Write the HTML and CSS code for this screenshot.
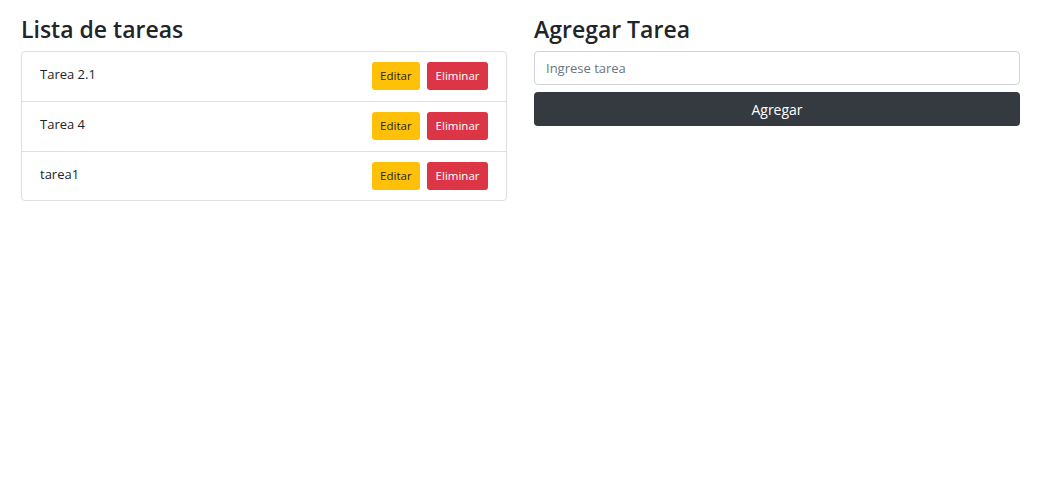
FILE: index.html
```html
<!DOCTYPE html>
<html lang="es">
<head>
<meta charset="utf-8">
<title>Tareas</title>
<link rel="stylesheet" href="styles.css">
</head>
<body>
<div class="page">
  <section class="col">
    <h3 class="title">Lista de tareas</h3>
    <ul class="list">
      <li class="item"><span class="name">Tarea 2.1</span><div class="actions"><button class="btn btn-warning">Editar</button><button class="btn btn-danger">Eliminar</button></div></li>
      <li class="item"><span class="name">Tarea 4</span><div class="actions"><button class="btn btn-warning">Editar</button><button class="btn btn-danger">Eliminar</button></div></li>
      <li class="item"><span class="name">tarea1</span><div class="actions"><button class="btn btn-warning">Editar</button><button class="btn btn-danger">Eliminar</button></div></li>
    </ul>
  </section>
  <section class="col">
    <h3 class="title">Agregar Tarea</h3>
    <form class="form">
      <input class="input" type="text" placeholder="Ingrese tarea">
      <button class="btn-dark" type="button">Agregar</button>
    </form>
  </section>
</div>
</body>
</html>
```
FILE: styles.css
```css
* { box-sizing: border-box; }
body {
  margin: 0;
  font-family: "Open Sans", "Noto Sans", sans-serif;
  color: #212529;
  background: #fff;
}
.page {
  display: grid;
  grid-template-columns: 486px 486px;
  column-gap: 27px;
  padding: 15px 0 0 21px;
}
.title {
  margin: 0 0 8px;
  font-size: 23px;
  font-weight: 600;
  line-height: 28px;
}
.list {
  list-style: none;
  margin: 0;
  padding: 0;
  border: 1px solid #dfdfdf;
  border-radius: 4px;
}
.item {
  display: flex;
  justify-content: space-between;
  align-items: flex-start;
  padding: 10px 18px 10px 18px;
  height: 50px;
  border-top: 1px solid #dfdfdf;
}
.item:first-child { border-top: 0; height: 49px; }
.item:last-child { height: 49px; padding-bottom: 9px; }
.name { font-size: 13px; line-height: 24px; }
.actions { display: flex; gap: 7px; }
.btn {
  font-family: inherit;
  font-size: 11.5px;
  line-height: 28px;
  height: 28px;
  padding: 0 8.5px;
  border: 0;
  border-radius: 3px;
}
.btn-warning { background: #ffc107; color: #212529; }
.btn-danger { background: #dc3545; color: #fff; }
.form { display: flex; flex-direction: column; gap: 7px; }
.input {
  height: 34px;
  border: 1px solid #ced4da;
  border-radius: 4px;
  padding: 0 11px;
  font-family: inherit;
  font-size: 13px;
  color: #495057;
}
.input::placeholder { color: #6c757d; }
.btn-dark {
  height: 34px;
  border: 0;
  border-radius: 4px;
  background: #343a40;
  color: #fff;
  font-family: inherit;
  font-size: 14px;
}
```
